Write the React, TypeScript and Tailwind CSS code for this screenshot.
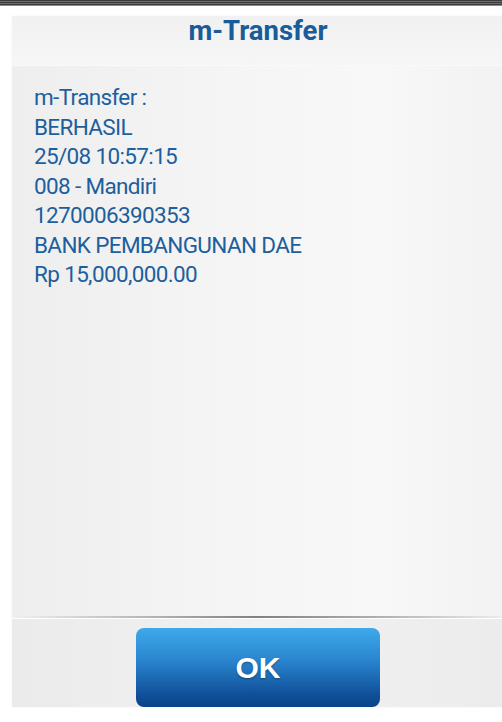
export default function App() {
  const lines = [
    'm-Transfer :',
    'BERHASIL',
    '25/08 10:57:15',
    '008 - Mandiri',
    '1270006390353',
    'BANK PEMBANGUNAN DAE',
    'Rp 15,000,000.00',
  ]

  return (
    <div className="w-[502px] h-[722px] bg-white flex flex-col overflow-hidden">
      <div className="h-[6px] bg-[repeating-linear-gradient(180deg,#3c3c3c_0px,#3c3c3c_1px,#6a6a6a_1px,#6a6a6a_2px)] border-b border-[#8a8a8a]" />
      <div className="ml-[12px] mt-[10px] h-[691px] flex flex-col bg-[linear-gradient(90deg,#eeeeee_0%,#f5f5f5_45%,#f8f8f8_75%,#f2f2f2_100%)] shadow-[0_0_2px_rgba(0,0,0,0.06)]">
        <div className="h-[50px] flex items-start justify-center border-b border-[#fafafa] bg-[linear-gradient(180deg,#f1f1f1,#f6f6f6)]">
          <h1 className="font-['Roboto',sans-serif] font-bold text-[27.5px] leading-[29px] text-[#1a5b99] pl-[2px]">
            m-Transfer
          </h1>
        </div>
        <div className="flex-1 pl-[22px] pt-[17px] font-['Roboto',sans-serif] text-[22.5px] leading-[29.5px] text-[#1d5f9e] tracking-[-0.65px]">
          {lines.map(line => (
            <div key={line}>{line}</div>
          ))}
        </div>
        <div className="h-[2px] bg-[linear-gradient(90deg,#f0f0f0_0%,#b0b0b0_30%,#7e8186_50%,#b0b0b0_75%,#ececec_100%)]" />
        <div className="h-[89px] flex items-end justify-center pl-[2px] bg-[linear-gradient(90deg,#ebebeb_0%,#f1f1f1_50%,#ececec_100%)] border-t border-white">
          <button className="w-[244px] h-[79px] rounded-[8px] bg-[linear-gradient(180deg,#3ea9ea_0%,#2a86cf_40%,#0f4f98_85%,#0a4287_100%)] text-white font-['Liberation_Sans',Arial,sans-serif] font-bold text-[30px] [text-shadow:0_1px_2px_rgba(0,0,0,0.35)]">
            OK
          </button>
        </div>
      </div>
    </div>
  )
}
